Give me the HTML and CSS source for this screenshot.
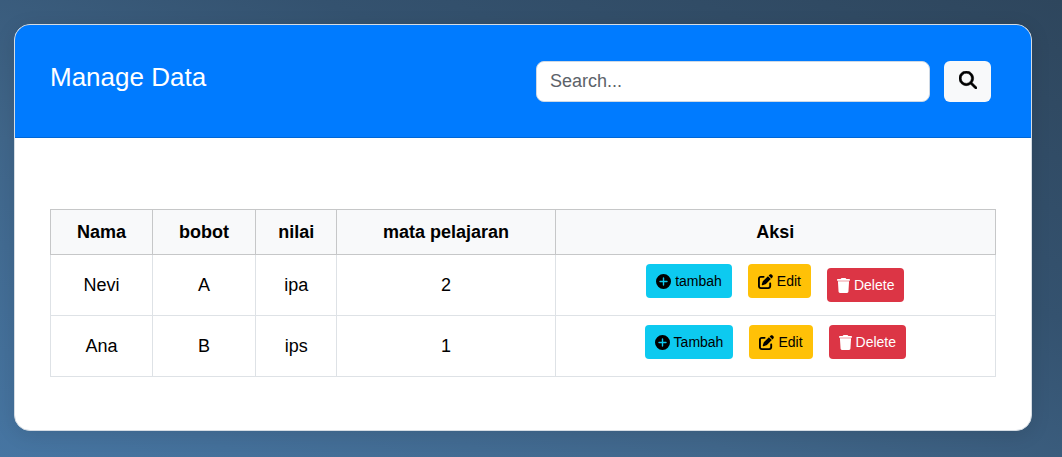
FILE: index.html
```html
<!DOCTYPE html>
<html lang="id">
<head>
<meta charset="utf-8">
<meta name="viewport" content="width=device-width, initial-scale=1">
<title>Manage Data</title>
<link rel="stylesheet" href="styles.css">
</head>
<body>
<svg class="sprite" aria-hidden="true">
  <symbol id="search" viewBox="0 0 512 512"><path d="M416 208c0 45.900-14.900 88.300-40 122.700L502.600 457.400c12.500 12.500 12.500 32.800 0 45.300s-32.800 12.500-45.300 0L330.700 376c-34.400 25.200-76.800 40-122.700 40C93.100 416 0 322.900 0 208S93.100 0 208 0S416 93.100 416 208zM208 352a144 144 0 1 0 0-288 144 144 0 1 0 0 288z"/></symbol>
  <symbol id="plus" viewBox="0 0 512 512"><path d="M256 512A256 256 0 1 0 256 0a256 256 0 1 0 0 512zM232 376V280H136c-13.300 0-24-10.700-24-24s10.700-24 24-24h96V136c0-13.300 10.700-24 24-24s24 10.700 24 24v96h96c13.300 0 24 10.700 24 24s-10.700 24-24 24H280v96c0 13.300-10.700 24-24 24s-24-10.700-24-24z"/></symbol>
  <symbol id="edit" viewBox="0 0 512 512"><path d="M471.600 21.700c-21.900-21.900-57.300-21.900-79.200 0L362.300 51.700l97.900 97.900 30.100-30.100c21.900-21.900 21.900-57.300 0-79.200L471.600 21.700zm-299.200 220c-6.100 6.100-10.800 13.600-13.500 21.900l-29.600 88.800c-2.900 8.600-.6 18.100 5.800 24.600s15.900 8.700 24.600 5.800l88.800-29.600c8.200-2.700 15.700-7.400 21.900-13.500L437.700 172.300 339.700 74.300 172.400 241.700zM96 64C43 64 0 107 0 160V416c0 53 43 96 96 96H352c53 0 96-43 96-96V320c0-17.700-14.300-32-32-32s-32 14.300-32 32v96c0 17.700-14.300 32-32 32H96c-17.700 0-32-14.300-32-32V160c0-17.700 14.300-32 32-32h96c17.700 0 32-14.300 32-32s-14.300-32-32-32H96z"/></symbol>
  <symbol id="trash" viewBox="0 0 448 512"><path d="M135.200 17.700L128 32H32C14.300 32 0 46.300 0 64S14.300 96 32 96H416c17.700 0 32-14.300 32-32s-14.300-32-32-32H320l-7.200-14.300C307.400 6.800 296.300 0 284.200 0H163.800c-12.100 0-23.200 6.800-28.600 17.700zM416 112H32L53.200 467c1.600 25.300 22.600 45 47.900 45H346.900c25.300 0 46.300-19.700 47.900-45L416 112z"/></symbol>
</svg>
<main class="card">
  <header class="card-header">
    <h1 class="title">Manage Data</h1>
    <form class="search">
      <input class="search-input" type="search" placeholder="Search..." aria-label="Search">
      <button class="search-button" type="button" aria-label="Search"><svg class="search-icon"><use href="#search"/></svg></button>
    </form>
  </header>
  <div class="card-body">
    <table class="table">
      <colgroup><col class="col-name"><col class="col-weight"><col class="col-score"><col class="col-subject"><col></colgroup>
      <thead>
        <tr><th scope="col">Nama</th><th scope="col">bobot</th><th scope="col">nilai</th><th scope="col">mata pelajaran</th><th scope="col">Aksi</th></tr>
      </thead>
      <tbody>
        <tr>
          <td>Nevi</td><td>A</td><td>ipa</td><td>2</td>
          <td class="actions-cell"><div class="actions">
            <a class="btn btn-info" href="#"><svg class="icon"><use href="#plus"/></svg>tambah</a>
            <a class="btn btn-warning" href="#"><svg class="icon"><use href="#edit"/></svg>Edit</a>
            <button class="btn btn-danger btn-lowered" type="button"><svg class="icon icon-narrow"><use href="#trash"/></svg>Delete</button>
          </div></td>
        </tr>
        <tr>
          <td>Ana</td><td>B</td><td>ips</td><td>1</td>
          <td class="actions-cell"><div class="actions">
            <a class="btn btn-info" href="#"><svg class="icon"><use href="#plus"/></svg>Tambah</a>
            <a class="btn btn-warning" href="#"><svg class="icon"><use href="#edit"/></svg>Edit</a>
            <button class="btn btn-danger" type="button"><svg class="icon icon-narrow"><use href="#trash"/></svg>Delete</button>
          </div></td>
        </tr>
      </tbody>
    </table>
  </div>
</main>
</body>
</html>
```
FILE: styles.css
```css
* { box-sizing: border-box; }
html { min-height: 100%; background: linear-gradient(to top right, #4675a2, #40668a 35%, #34526f 65%, #2e465d); }
body {
  margin: 0;
  padding: 24px 30px 26px 14px;
  font-family: "Liberation Sans", Arial, sans-serif;
  font-size: 18px;
  line-height: 27px;
  color: #000;
}
.sprite { display: none; }
.card {
  overflow: hidden;
  background: #fff;
  border: 1px solid #d5dce3;
  border-radius: 16px;
  box-shadow: 0 4px 20px rgba(0, 0, 0, 0.1);
}
.card-header {
  display: flex;
  align-items: flex-start;
  justify-content: space-between;
  padding: 36px 40px 35px 35px;
  background: #007bff;
  border-bottom: 1px solid #0067d6;
}
.title { margin: 0; font-size: 26px; font-weight: 400; line-height: 32px; color: #fff; }
.search { display: flex; gap: 14px; width: 50%; max-width: 455px; }
.search-input {
  flex: 1;
  min-width: 0;
  height: 41px;
  padding: 0 13px;
  font: inherit;
  color: #212529;
  background: #fff;
  border: 1px solid #ced9e5;
  border-radius: 8px;
}
.search-input::placeholder { color: #5c6269; opacity: 1; }
.search-button {
  display: flex;
  align-items: center;
  justify-content: center;
  width: 47px;
  height: 41px;
  padding: 0 0 4px;
  border: 0;
  border-radius: 6px;
  background: #f8f9fa;
}
.search-icon { width: 18px; height: 18px; stroke: #000; stroke-width: 16px; }
.card-body { padding: 71px 35px 53px; }
.table { width: 100%; border-collapse: collapse; table-layout: fixed; text-align: center; }
.col-name { width: 10.8%; }
.col-weight { width: 10.9%; }
.col-score { width: 8.6%; }
.col-subject { width: 23.1%; }
.table th { padding: 9px 9px 8px; font-weight: 700; background: #f8f9fa; border: 1px solid #c6c7c8; }
.table td { height: 61px; padding: 9px; border: 1px solid #dee2e6; }
.table .actions-cell { vertical-align: top; }
.actions { display: flex; align-items: flex-start; justify-content: center; gap: 16px; }
.btn {
  display: flex;
  align-items: center;
  gap: 4px;
  height: 34px;
  padding: 0 10px;
  font-family: inherit;
  font-size: 14px;
  line-height: 20px;
  color: #000;
  text-decoration: none;
  border: 0;
  border-radius: 4px;
}
.btn-info { background: #0dcaf0; }
.btn-warning { background: #ffc107; }
.btn-danger { background: #dc3545; color: #fff; }
.btn-lowered { margin-top: 4px; }
.icon { width: 15px; height: 15px; fill: currentColor; }
.icon-narrow { width: 13px; }
```
